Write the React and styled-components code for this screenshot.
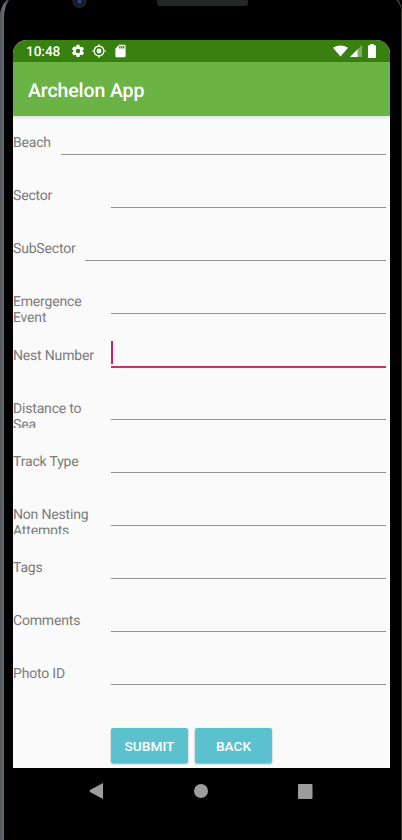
import React from "react";
import styled, { createGlobalStyle } from "styled-components";

const GlobalStyle = createGlobalStyle`
  * { box-sizing: border-box; }
  body { margin: 0; background: #000; }
`;

const Phone = styled.div`
  position: relative;
  display: flex;
  flex-direction: column;
  width: 402px;
  height: 840px;
  padding: 40px 12px 0 13px;
  background: #000;
  overflow: hidden;
  font-family: Roboto, sans-serif;
  text-rendering: geometricPrecision;
`;

const Hardware = styled.svg`
  position: absolute;
  inset: 0;
`;

const Screen = styled.main`
  display: flex;
  flex-direction: column;
  height: 728px;
  background: #fafafa;
  border-radius: 14px 14px 0 0;
  overflow: hidden;
  position: relative;
`;

const StatusBar = styled.header`
  display: flex;
  align-items: center;
  justify-content: space-between;
  height: 22px;
  flex: none;
  padding: 0 14px 0 13px;
  background: #388010;
  color: #fff;
`;

const Clock = styled.span`
  width: 44.5px;
  padding-top: 1px;
  font-size: 13.6px;
  font-weight: 500;
  line-height: 22px;
  letter-spacing: -0.05px;
`;

const StatusGroup = styled.div`
  display: flex;
  align-items: center;
`;

const StatusIcon = styled.svg`
  display: block;
  margin-left: ${({ $gap }) => $gap || 0}px;
  fill: currentColor;
`;

const AppBar = styled.div`
  display: flex;
  align-items: center;
  height: 54px;
  flex: none;
  padding: 3px 15px 0;
  background: #6ab344;
  box-shadow: 0 1px 4px rgba(0, 0, 0, 0.14);
`;

const Title = styled.h1`
  margin: 0;
  color: #fff;
  font-size: 19.5px;
  line-height: 24px;
  font-weight: 500;
  letter-spacing: -0.1px;
`;

const Form = styled.form`
  display: flex;
  flex-direction: column;
`;

const Row = styled.div`
  display: flex;
  height: 53px;
  padding-right: 4px;
`;

const Label = styled.label`
  width: ${({ $width }) => $width}px;
  height: 47px;
  flex: none;
  padding: ${({ $top }) => $top}px 8px 0 0;
  overflow: hidden;
  color: #7b7b7b;
  font-size: 14px;
  line-height: 16px;
  letter-spacing: -0.18px;
`;

const Field = styled.div`
  display: flex;
  flex: 1;
  align-items: flex-end;
  height: ${({ $active }) => ($active ? 40 : 39)}px;
  border-bottom: ${({ $active }) => ($active ? "2px solid #d92b69" : "1px solid #929292")};
`;

const Caret = styled.span`
  width: 2px;
  height: 23px;
  margin-bottom: 2px;
  background: #d81b60;
`;

const Actions = styled.div`
  display: flex;
  gap: 7px;
  padding: 29px 0 0 98px;
`;

const Button = styled.button`
  width: 77px;
  height: 35px;
  padding: 0;
  border: 0;
  border-radius: 2px;
  background: #5bc1cf;
  box-shadow: 0 1px 2px rgba(0, 0, 0, 0.35);
  color: #fff;
  font: 500 13.7px Roboto, sans-serif;
`;

const NavBar = styled.nav`
  display: flex;
  align-items: center;
  justify-content: space-between;
  height: 46px;
  padding: 0 77px 0 76px;
`;

const NavIcon = styled.svg`
  display: block;
  fill: #9c9c9c;
`;

const fields = [
  { label: "Beach", width: 48 },
  { label: "Sector", width: 98 },
  { label: "SubSector", width: 72 },
  { label: "Emergence Event", width: 98 },
  { label: "Nest Number", width: 98, top: 20, active: true },
  { label: "Distance to Sea", width: 98, top: 20 },
  { label: "Track Type", width: 98, top: 20 },
  { label: "Non Nesting Attempts", width: 98, top: 20 },
  { label: "Tags", width: 98, top: 20 },
  { label: "Comments", width: 98, top: 20 },
  { label: "Photo ID", width: 98, top: 20 },
];

export default function App() {
  return (
    <>
      <GlobalStyle />
      <Phone>
        <Hardware width="402" height="840" viewBox="0 0 402 840" aria-hidden="true">
          <defs>
            <linearGradient id="rim" x1="0" x2="1">
              <stop offset="0" stopColor="#50545b" />
              <stop offset=".5" stopColor="#6b6f77" />
              <stop offset="1" stopColor="#444850" />
            </linearGradient>
          </defs>
          <path d="M0 13Q2 4 7 0H9Q4 7 4 18V840H0Z" fill="url(#rim)" />
          <path d="M397 0Q402 6 402 17V12Q401 4 398 0Z" fill="#77777a" />
          <path d="M401.5 12V840" stroke="#3b3935" />
          <circle cx="79.5" cy="1" r="7" fill="#202226" />
          <circle cx="79.5" cy="1" r="4.5" fill="#10172d" />
          <circle cx="79.5" cy="1.5" r="2.2" fill="#2b407b" />
          <rect x="157" y="-6" width="91" height="12" rx="3" fill="#252626" />
        </Hardware>
        <Screen>
          <StatusBar>
            <StatusGroup>
              <Clock>10:48</Clock>
              <StatusIcon width="14" height="14" viewBox="1 1 22 22">
                <path d="M19.14 12.94c.04-.3.06-.61.06-.94s-.02-.64-.07-.94l2.03-1.58a.49.49 0 0 0 .12-.61l-1.92-3.32a.49.49 0 0 0-.59-.22l-2.39.96a7 7 0 0 0-1.62-.94l-.36-2.54A.48.48 0 0 0 13.92 2h-3.84a.48.48 0 0 0-.47.41l-.36 2.54a7 7 0 0 0-1.62.94l-2.39-.96a.48.48 0 0 0-.59.22L2.74 8.87a.48.48 0 0 0 .12.61l2.03 1.58a7 7 0 0 0 0 1.88l-2.03 1.58a.49.49 0 0 0-.12.61l1.92 3.32c.12.22.37.29.59.22l2.39-.96c.5.38 1.03.7 1.62.94l.36 2.54c.05.24.24.41.48.41h3.84c.24 0 .44-.17.47-.41l.36-2.54a7 7 0 0 0 1.62-.94l2.39.96c.22.08.47 0 .59-.22l1.92-3.32a.48.48 0 0 0-.12-.61ZM12 15.6a3.6 3.6 0 1 1 0-7.2 3.6 3.6 0 0 1 0 7.2Z" />
              </StatusIcon>
              <StatusIcon $gap={7} width="14" height="14" viewBox="0.5 0.5 23 23">
                <path d="M12 8a4 4 0 1 0 0 8 4 4 0 0 0 0-8Zm8.94 3A9 9 0 0 0 13 3.06V1h-2v2.06A9 9 0 0 0 3.06 11H1v2h2.06A9 9 0 0 0 11 20.94V23h2v-2.06A9 9 0 0 0 20.94 13H23v-2ZM12 19a7 7 0 1 1 0-14 7 7 0 0 1 0 14Z" />
              </StatusIcon>
              <StatusIcon $gap={7} width="15" height="14" viewBox="1 1 22 22">
                <path d="M18 2h-8L4 8v12c0 1.1.9 2 2 2h12c1.1 0 2-.9 2-2V4c0-1.1-.9-2-2-2Zm-6 6h-2V4h2Zm3 0h-2V4h2Zm3 0h-2V4h2Z" />
              </StatusIcon>
            </StatusGroup>
            <StatusGroup>
              <StatusIcon width="15" height="12" viewBox="0 0 15 12">
                <path d="M0 2.7Q7.5-1.8 15 2.7L7.5 11.5Z" />
              </StatusIcon>
              <StatusIcon $gap={1.5} width="12" height="12" viewBox="0 0 12 12">
                <path d="M12 0V12H0Z" opacity=".35" />
                <path d="M7.5 4.5V12H0Z" />
              </StatusIcon>
              <StatusIcon $gap={6.5} width="8" height="14" viewBox="0 0 8 14">
                <path d="M2.3 0h3.4v1.3H7Q8 1.3 8 2.3V13Q8 14 7 14H1Q0 14 0 13V2.3Q0 1.3 1 1.3h1.3Z" />
              </StatusIcon>
            </StatusGroup>
          </StatusBar>
          <AppBar>
            <Title>Archelon App</Title>
          </AppBar>
          <Form>
            {fields.map(({ label, width, top = 19, active }) => (
              <Row key={label}>
                <Label $width={width} $top={top}>{label}</Label>
                <Field $active={active}>{active && <Caret />}</Field>
              </Row>
            ))}
            <Actions>
              <Button type="button">SUBMIT</Button>
              <Button type="button">BACK</Button>
            </Actions>
          </Form>
        </Screen>
        <NavBar>
          <NavIcon width="14" height="16" viewBox="0 0 14 16">
            <path d="M14 0V16L1 9Q0 8 1 7Z" />
          </NavIcon>
          <NavIcon width="14" height="14" viewBox="0 0 14 14">
            <circle cx="7" cy="7" r="7" />
          </NavIcon>
          <NavIcon width="15" height="15" viewBox="0 0 15 15">
            <rect width="14.5" height="15" rx="1" />
          </NavIcon>
        </NavBar>
      </Phone>
    </>
  );
}
